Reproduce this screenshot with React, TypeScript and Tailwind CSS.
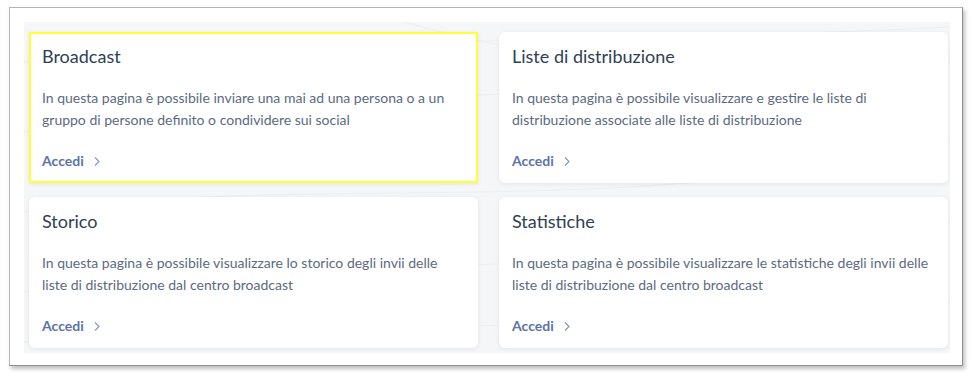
const cards = [
  {
    title: "Broadcast",
    text: "In questa pagina è possibile inviare una mai ad una persona o a un gruppo di persone definito o condividere sui social",
    active: true,
  },
  {
    title: "Liste di distribuzione",
    text: "In questa pagina è possibile visualizzare e gestire le liste di distribuzione associate alle liste di distribuzione",
  },
  {
    title: "Storico",
    text: "In questa pagina è possibile visualizzare lo storico degli invii delle liste di distribuzione dal centro broadcast",
  },
  {
    title: "Statistiche",
    text: "In questa pagina è possibile visualizzare le statistiche degli invii delle liste di distribuzione dal centro broadcast",
  },
];

const Chevron = () => (
  <svg width="8" height="11" viewBox="0 0 8 11" fill="none" className="ml-[9px]">
    <path d="M2 1.5 L6 5.5 L2 9.5" stroke="#8a9ab3" strokeWidth="1.2" />
  </svg>
);

// faint decorative lines behind the cards
const Waves = () => (
  <svg
    className="absolute inset-0 h-full w-full pointer-events-none"
    viewBox="0 0 926 331"
    preserveAspectRatio="none"
    fill="none"
  >
    <g stroke="#eceef2" strokeWidth="1">
      <path d="M0 40 C 200 10, 400 30, 926 5" />
      <path d="M0 110 C 250 60, 500 90, 926 40" />
      <path d="M0 190 C 300 150, 600 200, 926 120" />
      <path d="M0 270 C 280 230, 640 260, 926 200" />
      <path d="M380 0 C 520 40, 700 60, 926 30" />
      <path d="M0 320 C 300 290, 600 320, 926 280" />
    </g>
  </svg>
);

const Card = ({ title, text, active }: { title: string; text: string; active?: boolean }) => (
  <div
    className={
      active
        ? "relative flex flex-col bg-white border-2 border-[#ffff33] px-[11px] pt-[11px] pb-[11px] shadow-[0_1px_4px_rgba(0,0,0,0.08)]"
        : "relative flex flex-col bg-white rounded-md px-[13px] pt-[13px] pb-[13px] shadow-[0_1px_4px_rgba(0,0,0,0.08)]"
    }
  >
    <h3 className="text-[18px] leading-[22px] text-[#2f3f56]">{title}</h3>
    <p className="mt-[20px] text-[14px] leading-[22px] text-[#5b6b7f]">{text}</p>
    <a href="#" className="mt-[21px] flex items-center text-[14px] leading-[18px] font-bold text-[#5b73a6]">
      Accedi
      <Chevron />
    </a>
  </div>
);

export default function App() {
  return (
    <div className="h-[379px] w-[972px] bg-white pl-[9px] pt-[7px]" style={{ fontFamily: "Lato, 'Open Sans', sans-serif" }}>
      <div className="h-[359px] w-[954px] border border-[#b5b5b5] border-r-[#8f8f8f] border-b-[#8f8f8f] bg-white pl-[14px] pt-[14px] shadow-[2px_3px_4px_rgba(0,0,0,0.25)]">
        <div className="relative h-[331px] w-[926px] overflow-hidden bg-[#f5f6f8] pl-[5px] pr-[3px] pt-[10px]">
          <Waves />
          <div className="relative grid grid-cols-[449px_449px] gap-x-[21px] gap-y-[14px]">
            {cards.map((c) => (
              <Card key={c.title} {...c} />
            ))}
          </div>
        </div>
      </div>
    </div>
  );
}
